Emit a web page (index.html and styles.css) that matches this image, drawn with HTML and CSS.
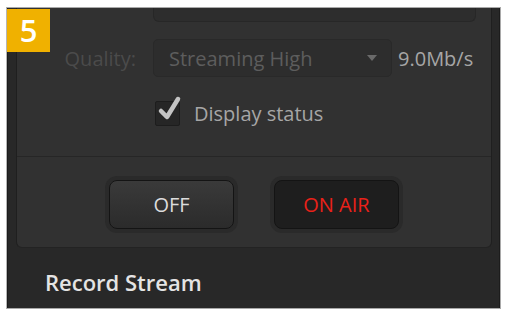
FILE: index.html
```html
<!DOCTYPE html>
<html lang="en">
<head>
  <meta charset="UTF-8">
  <title>Streaming Panel</title>
  <link rel="stylesheet" href="styles.css">
</head>
<body>
  <div class="frame">
    <div class="badge">5</div>

    <div class="panel">
      <div class="stream-section">
        <div class="row top-row">
          <div class="prev-field"></div>
        </div>

        <div class="row quality-row">
          <span class="label">Quality:</span>
          <div class="select">
            <span>Streaming High</span>
            <span class="arrow"></span>
          </div>
          <span class="rate">9.0Mb/s</span>
        </div>

        <label class="row check-row">
          <span class="checkbox">
            <svg width="26" height="30" viewBox="0 0 26 30">
              <path d="M5 17 L11 23 L22 5" fill="none" stroke="#c4c4c4" stroke-width="4.5" stroke-linecap="round" stroke-linejoin="round"/>
            </svg>
          </span>
          <span class="check-text">Display status</span>
        </label>
      </div>

      <div class="button-section">
        <button class="btn btn-off">OFF</button>
        <button class="btn btn-air">ON AIR</button>
      </div>
    </div>

    <div class="section-title">Record Stream</div>
  </div>
</body>
</html>
```

FILE: styles.css
```css
body {
  margin: 0;
  background: #ffffff;
  font-family: "Open Sans", "Liberation Sans", sans-serif;
}

.frame {
  position: relative;
  margin: 7px 0 0 6px;
  width: 495px;
  height: 302px;
  box-sizing: border-box;
  background: #282828;
  border: 1px solid #a9a9a9;
  border-left-color: #b5b5b5;
  padding: 0 8px 0 9px;
  box-shadow: inset 1px 0 0 #1c1c1c, inset -1px 0 0 #1c1c1c;
}

.badge {
  position: absolute;
  left: 0;
  top: 1px;
  width: 43px;
  height: 43px;
  background: #f0b100;
  color: #ffffff;
  font-size: 31px;
  font-weight: 600;
  line-height: 43px;
  text-align: center;
}

.panel {
  height: 239px;
  background: #313131;
  border-left: 1px solid #1f1f1f;
  border-right: 1px solid #1f1f1f;
  border-bottom: 1px solid #232323;
  border-radius: 0 0 6px 6px;
  display: flex;
  flex-direction: column;
}

.stream-section {
  height: 148px;
  border-bottom: 1px solid #262626;
}

.row {
  display: flex;
  align-items: center;
}

.top-row {
  padding-left: 136px;
}

.prev-field {
  width: 321px;
  height: 13px;
  background: #2d2d2d;
  border: 1px solid #272727;
  border-top: none;
  border-radius: 0 0 6px 6px;
}

.quality-row {
  margin-top: 17px;
  height: 38px;
}

.label {
  width: 119px;
  text-align: right;
  font-size: 20px;
  color: #4b4b4b;
}

.select {
  margin-left: 17px;
  width: 239px;
  height: 38px;
  box-sizing: border-box;
  background: #2d2d2d;
  border: 1px solid #292929;
  border-radius: 5px;
  display: flex;
  align-items: center;
  justify-content: space-between;
  padding: 0 14px 0 15px;
  font-size: 20px;
  color: #5d5d5d;
}

.arrow {
  width: 0;
  height: 0;
  border-left: 5px solid transparent;
  border-right: 5px solid transparent;
  border-top: 6px solid #6a6a6a;
}

.rate {
  margin-left: 6px;
  font-size: 20px;
  color: #a6a6a6;
}

.check-row {
  margin-top: 23px;
  padding-left: 138px;
}

.checkbox {
  position: relative;
  width: 23px;
  height: 23px;
  background: #262626;
  border: 1px solid #1d1d1d;
  border-radius: 2px;
}

.checkbox svg {
  position: absolute;
  left: 0;
  top: -8px;
}

.check-text {
  margin-left: 14px;
  font-size: 20px;
  color: #a6a6a6;
}

.button-section {
  flex: 1;
  display: flex;
  justify-content: center;
  align-items: center;
  gap: 40px;
  padding-top: 4px;
}

.btn {
  width: 125px;
  height: 49px;
  border: 1px solid #141414;
  border-radius: 8px;
  box-shadow: 0 0 0 4px #2a2a2a;
  font-family: "Open Sans", "Liberation Sans", sans-serif;
  font-size: 20px;
  cursor: pointer;
}

.btn-off {
  background: linear-gradient(#3a3a3a, #2b2b2b);
  color: #dcdcdc;
}

.btn-air {
  background: #1e1e1e;
  color: #ea2119;
}

.section-title {
  padding: 19px 0 0 29px;
  font-size: 22px;
  font-weight: 600;
  color: #e4e4e4;
}
```
